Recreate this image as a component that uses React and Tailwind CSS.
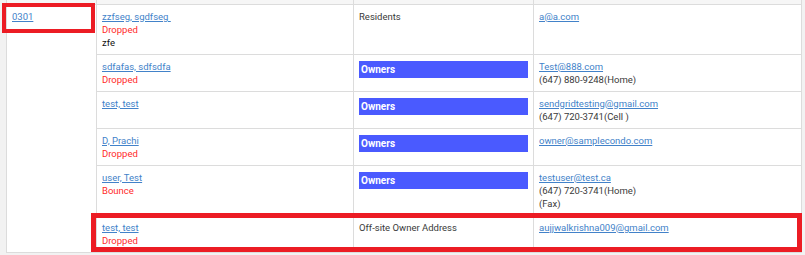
import React from "react";

// Recipient listing for one unit, with two annotation boxes drawn on top
const rows = [
  {
    name: "zzfseg, sgdfseg\u00a0",
    status: "Dropped",
    extra: "zfe",
    type: "Residents",
    email: "a@a.com",
    phones: [],
  },
  { name: "sdfafas, sdfsdfa", status: "Dropped", type: "Owners", badge: true, email: "Test@888.com", phones: ["(647) 880-9248(Home)"] },
  { name: "test, test", type: "Owners", badge: true, email: "sendgridtesting@gmail.com", phones: ["(647) 720-3741(Cell )"] },
  { name: "D, Prachi", status: "Dropped", type: "Owners", badge: true, email: "owner@samplecondo.com", phones: [] },
  { name: "user, Test", status: "Bounce", type: "Owners", badge: true, email: "testuser@test.ca", phones: ["(647) 720-3741(Home)", "(Fax)"] },
  { name: "test, test", status: "Dropped", type: "Off-site Owner Address", email: "aujjwalkrishna009@gmail.com", phones: [] },
];

const cell = "border border-[#dcdcdc] bg-white px-[5px] py-[5px] align-top";
const link = "text-[#4282c9] underline underline-offset-1";

export default function App() {
  return (
    <div
      className="relative w-[805px] h-[255px] overflow-hidden bg-[#f2f2f2] pl-[6px] text-[9.5px] leading-[13px] text-[#3a3a3a]"
      style={{ fontFamily: "Roboto, 'Liberation Sans', sans-serif" }}
    >
      <table className="table-fixed border-collapse w-[795px]">
        <colgroup>
          <col className="w-[90px]" />
          <col className="w-[257px]" />
          <col className="w-[180px]" />
          <col className="w-[268px]" />
        </colgroup>
        <tbody>
          <tr className="h-[4px]">
            <td className="border-x border-b border-[#dcdcdc] bg-[#f6f6f6] p-0" />
            <td className="border-x border-b border-[#dcdcdc] bg-[#f6f6f6] p-0" />
            <td className="border-x border-b border-[#dcdcdc] bg-[#f6f6f6] p-0" />
            <td className="border-x border-b border-[#dcdcdc] bg-[#f6f6f6] p-0" />
          </tr>
          {rows.map((r, i) => (
            <tr key={i}>
              {i === 0 && (
                <td rowSpan={rows.length} className={cell}>
                  <a className={link}>0301</a>
                </td>
              )}
              <td className={cell}>
                <div>
                  <a className={link}>{r.name}</a>
                </div>
                {r.status && <div className="text-[#ff2a2a]">{r.status}</div>}
                {r.extra && <div className="text-[#111]">{r.extra}</div>}
              </td>
              <td className={cell}>
                {r.badge ? (
                  <div className="mt-px h-[17px] bg-[#4a5aff] pl-[2px] text-[10px] font-bold leading-[17px] text-white">
                    {r.type}
                  </div>
                ) : (
                  <div>{r.type}</div>
                )}
              </td>
              <td className={cell}>
                <div>
                  <a className={link}>{r.email}</a>
                </div>
                {r.phones.map((p) => (
                  <div key={p}>{p}</div>
                ))}
              </td>
            </tr>
          ))}
        </tbody>
      </table>

      {/* annotation highlights */}
      <div className="absolute left-[2px] top-[3px] h-[30px] w-[93px] border-[4px] border-[#ec1c24]" />
      <div className="absolute left-[91px] top-[213px] h-[39px] w-[711px] border-[5px] border-[#ec1c24]" />
    </div>
  );
}
